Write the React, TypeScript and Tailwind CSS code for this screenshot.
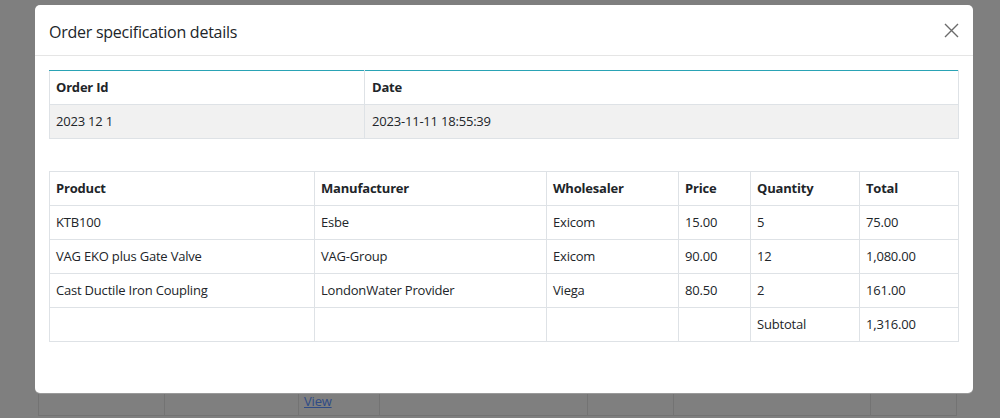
import React from "react";

const items = [
  { product: "KTB100", manufacturer: "Esbe", wholesaler: "Exicom", price: "15.00", qty: "5", total: "75.00" },
  { product: "VAG EKO plus Gate Valve", manufacturer: "VAG-Group", wholesaler: "Exicom", price: "90.00", qty: "12", total: "1,080.00" },
  { product: "Cast Ductile Iron Coupling", manufacturer: "LondonWater Provider", wholesaler: "Viega", price: "80.50", qty: "2", total: "161.00" },
];

const font = { fontFamily: '"Open Sans", "Noto Sans", sans-serif' };

export default function App() {
  const cell = "h-[34px] border border-[#dee2e6] px-[6px] py-0 text-left align-middle";
  const head = `${cell} font-bold text-[#212529]`;

  return (
    <div className="relative h-[418px] w-[1000px] overflow-hidden bg-[#7f7f7f] text-[13px] tracking-[-0.2px] text-[#212529]" style={font}>
      {/* page behind the overlay */}
      <table className="mt-[381px] ml-[38px] w-[918px] table-fixed border-collapse">
        <colgroup>
          <col className="w-[126px]" />
          <col className="w-[134px]" />
          <col className="w-[81px]" />
          <col className="w-[208px]" />
          <col className="w-[86px]" />
          <col className="w-[197px]" />
          <col className="w-[86px]" />
        </colgroup>
        <tbody>
          <tr>
            <td className="h-[34px] border-x border-b border-[#737373]" />
            <td className="h-[34px] border-x border-b border-[#737373]" />
            <td className="h-[34px] border-x border-b border-[#737373] px-[5px] pt-[7px]">
              <a className="text-[#2f4b86] underline">View</a>
            </td>
            <td className="h-[34px] border-x border-b border-[#737373]" />
            <td className="h-[34px] border-x border-b border-[#737373]" />
            <td className="h-[34px] border-x border-b border-[#737373]" />
            <td className="h-[34px] border-x border-b border-[#737373]" />
          </tr>
        </tbody>
      </table>

      {/* modal */}
      <div className="absolute left-[35px] top-[5px] flex h-[388px] w-[938px] flex-col rounded-[5px] bg-white shadow-[0_1px_0_#9a9a9a]">
        <div className="flex h-[51px] items-center justify-between border-b border-[#e5e5e5] pl-[14px] pr-[12px]">
          <h4 className="pt-[3px] text-[16px] font-normal tracking-[-0.25px] text-[#212529]">Order specification details</h4>
          <button className="flex h-[20px] w-[20px] items-center justify-center">
            <svg width="15" height="15" viewBox="0 0 15 15" fill="none" stroke="#6b6b6b" strokeWidth="1.4">
              <path d="M1 1L14 14M14 1L1 14" />
            </svg>
          </button>
        </div>

        <div className="flex flex-col gap-[32px] px-[14px] pt-[14px]">
          <table className="w-full table-fixed border-collapse border-t border-t-[#2aa3b5]">
            <colgroup>
              <col className="w-[315px]" />
              <col />
            </colgroup>
            <thead>
              <tr>
                <th className={`${head} border-t-[#2aa3b5]`}>Order Id</th>
                <th className={`${head} border-t-[#2aa3b5] pl-[7px]`}>Date</th>
              </tr>
            </thead>
            <tbody>
              <tr className="bg-[#f1f1f1]">
                <td className={cell}>2023 12 1</td>
                <td className={`${cell} pl-[7px]`}>2023-11-11 18:55:39</td>
              </tr>
            </tbody>
          </table>

          <table className="w-full table-fixed border-collapse">
            <colgroup>
              <col className="w-[265px]" />
              <col className="w-[232px]" />
              <col className="w-[132px]" />
              <col className="w-[72px]" />
              <col className="w-[109px]" />
              <col />
            </colgroup>
            <thead>
              <tr>
                <th className={head}>Product</th>
                <th className={head}>Manufacturer</th>
                <th className={head}>Wholesaler</th>
                <th className={head}>Price</th>
                <th className={head}>Quantity</th>
                <th className={head}>Total</th>
              </tr>
            </thead>
            <tbody>
              {items.map((it) => (
                <tr key={it.product}>
                  <td className={cell}>{it.product}</td>
                  <td className={cell}>{it.manufacturer}</td>
                  <td className={cell}>{it.wholesaler}</td>
                  <td className={cell}>{it.price}</td>
                  <td className={cell}>{it.qty}</td>
                  <td className={cell}>{it.total}</td>
                </tr>
              ))}
              <tr>
                <td className={cell} />
                <td className={cell} />
                <td className={cell} />
                <td className={cell} />
                <td className={cell}>Subtotal</td>
                <td className={cell}>1,316.00</td>
              </tr>
            </tbody>
          </table>
        </div>
      </div>
    </div>
  );
}
